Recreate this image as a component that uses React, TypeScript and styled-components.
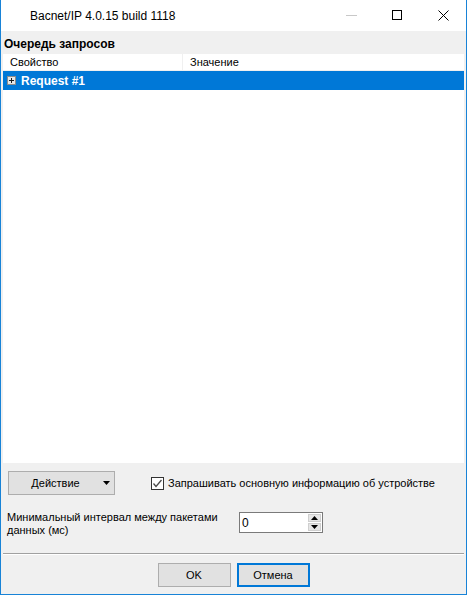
import styled, { createGlobalStyle } from "styled-components";

const GlobalStyle = createGlobalStyle`
  html, body {
    margin: 0;
    padding: 0;
    background: #ffffff;
  }
  * {
    box-sizing: border-box;
  }
`;

const App = () => {
  return (
    <>
      <GlobalStyle />
      <Window>
        <TitleBar>
          <Title>Bacnet/IP 4.0.15 build 1118</Title>
          <Controls>
            <ControlButton>
              <svg width="11" height="11" viewBox="0 0 11 11">
                <line x1="0" y1="5.5" x2="11" y2="5.5" stroke="#c8c8c8" strokeWidth="1" />
              </svg>
            </ControlButton>
            <ControlButton>
              <svg width="11" height="11" viewBox="0 0 11 11">
                <rect x="0.5" y="0.5" width="9" height="9" fill="none" stroke="#000" strokeWidth="1" />
              </svg>
            </ControlButton>
            <ControlButton>
              <svg width="11" height="11" viewBox="0 0 11 11">
                <path d="M0.5 0.5 L10.5 10.5 M10.5 0.5 L0.5 10.5" stroke="#000" strokeWidth="1" />
              </svg>
            </ControlButton>
          </Controls>
        </TitleBar>
        <Body>
          <SectionTitle>Очередь запросов</SectionTitle>
          <Grid>
            <GridHeader>
              <HeaderCell $width={180}>Свойство</HeaderCell>
              <HeaderCell>Значение</HeaderCell>
            </GridHeader>
            <GridRow $selected>
              <Expander>
                <svg width="9" height="9" viewBox="0 0 9 9">
                  <rect x="0.5" y="0.5" width="8" height="8" fill="#e6e6e6" stroke="#8c8c8c" />
                  <path d="M2 4.5 H7 M4.5 2 V7" stroke="#1e1e1e" strokeWidth="1" />
                </svg>
              </Expander>
              <RowLabel>Request #1</RowLabel>
            </GridRow>
          </Grid>
          <ActionRow>
            <Button $width={107}>
              <ButtonText>Действие</ButtonText>
              <svg width="7" height="4" viewBox="0 0 7 4">
                <path d="M0 0 H7 L3.5 4 Z" fill="#000" />
              </svg>
            </Button>
            <CheckLabel>
              <CheckBox>
                <svg width="11" height="11" viewBox="0 0 11 11">
                  <path d="M1.5 5.5 L4 8.5 L9.5 2" fill="none" stroke="#4a4a4a" strokeWidth="1.3" />
                </svg>
              </CheckBox>
              Запрашивать основную информацию об устройстве
            </CheckLabel>
          </ActionRow>
          <IntervalRow>
            <FieldLabel>
              Минимальный интервал между пакетами
              <br />
              данных (мс)
            </FieldLabel>
            <Spin>
              <SpinValue>0</SpinValue>
              <SpinButtons>
                <SpinButton>
                  <svg width="7" height="4" viewBox="0 0 7 4">
                    <path d="M0 4 H7 L3.5 0 Z" fill="#000" />
                  </svg>
                </SpinButton>
                <SpinButton>
                  <svg width="7" height="4" viewBox="0 0 7 4">
                    <path d="M0 0 H7 L3.5 4 Z" fill="#000" />
                  </svg>
                </SpinButton>
              </SpinButtons>
            </Spin>
          </IntervalRow>
          <Separator />
          <Footer>
            <Button $width={73}>OK</Button>
            <Button $width={73} $default>
              Отмена
            </Button>
          </Footer>
        </Body>
      </Window>
    </>
  );
};

export default App;

const Window = styled.div`
  width: 467px;
  height: 595px;
  display: flex;
  flex-direction: column;
  border: 1px solid #1883d7;
  border-top: none;
  font-family: "Liberation Sans", Arial, sans-serif;
  font-size: 11px;
  color: #000;
`;

const TitleBar = styled.div`
  height: 31px;
  flex: none;
  display: flex;
  align-items: center;
  background: #ffffff;
  padding-left: 29px;
`;

const Title = styled.div`
  flex: 1;
  font-size: 12px;
  color: #000;
  padding-top: 1px;
`;

const Controls = styled.div`
  display: flex;
  height: 100%;
`;

const ControlButton = styled.div`
  width: 46px;
  height: 100%;
  display: flex;
  align-items: center;
  justify-content: center;
  padding-bottom: 1px;
`;

const Body = styled.div`
  flex: 1;
  display: flex;
  flex-direction: column;
  background: #f0f0f0;
  padding: 0 2px 7px;
`;

const SectionTitle = styled.div`
  height: 23px;
  flex: none;
  display: flex;
  align-items: center;
  padding: 2px 0 0 1px;
  font-weight: bold;
  font-size: 12px;
`;

const Grid = styled.div`
  flex: 1;
  background: #ffffff;
  display: flex;
  flex-direction: column;
`;

const GridHeader = styled.div`
  height: 17px;
  display: flex;
  border-bottom: 1px solid #f0f0f0;
`;

const HeaderCell = styled.div<{ $width?: number }>`
  width: ${(p) => (p.$width ? `${p.$width}px` : "auto")};
  flex: ${(p) => (p.$width ? "none" : "1")};
  padding-left: 7px;
  display: flex;
  align-items: center;
  border-right: ${(p) => (p.$width ? "1px solid #f0f0f0" : "none")};
`;

const GridRow = styled.div<{ $selected?: boolean }>`
  height: 19px;
  display: flex;
  align-items: center;
  gap: 5px;
  padding-left: 4px;
  background: ${(p) => (p.$selected ? "#0078d7" : "#ffffff")};
  color: ${(p) => (p.$selected ? "#ffffff" : "#000")};
`;

const Expander = styled.div`
  display: flex;
  width: 9px;
  height: 9px;
`;

const RowLabel = styled.span`
  font-weight: bold;
  font-size: 12px;
`;

const ActionRow = styled.div`
  display: flex;
  align-items: center;
  margin-top: 8px;
  padding-left: 5px;
  height: 24px;
`;

const Button = styled.div<{ $width: number; $default?: boolean }>`
  width: ${(p) => p.$width}px;
  height: 24px;
  display: flex;
  align-items: center;
  justify-content: center;
  gap: 23px;
  background: #e1e1e1;
  border: ${(p) => (p.$default ? "2px solid #0078d7" : "1px solid #adadad")};
  font-size: 11px;
`;

const ButtonText = styled.span`
  padding-left: 18px;
`;

const CheckLabel = styled.label`
  display: flex;
  align-items: center;
  gap: 4px;
  margin-left: 36px;
  font-size: 11px;
`;

const CheckBox = styled.div`
  width: 13px;
  height: 13px;
  border: 1px solid #333333;
  background: #ffffff;
  display: flex;
  align-items: center;
  justify-content: center;
`;

const IntervalRow = styled.div`
  display: flex;
  align-items: flex-start;
  margin-top: 17px;
  padding-left: 4px;
`;

const FieldLabel = styled.div`
  width: 232px;
  font-size: 11px;
  line-height: 13px;
  margin-top: -1px;
`;

const Spin = styled.div`
  width: 84px;
  height: 21px;
  border: 1px solid #7a7a7a;
  background: #ffffff;
  display: flex;
  align-items: center;
  justify-content: space-between;
  padding: 0 1px 0 2px;
`;

const SpinValue = styled.span`
  font-size: 12px;
`;

const SpinButtons = styled.div`
  display: flex;
  flex-direction: column;
  gap: 1px;
`;

const SpinButton = styled.div`
  width: 13px;
  height: 8px;
  background: #e6e6e6;
  border: 1px solid #cfcfcf;
  display: flex;
  align-items: center;
  justify-content: center;
`;

const Separator = styled.div`
  margin-top: 16px;
  height: 2px;
  border-top: 1px solid #a0a0a0;
  border-bottom: 1px solid #ffffff;
`;

const Footer = styled.div`
  display: flex;
  justify-content: center;
  gap: 6px;
  margin-top: 8px;
`;
